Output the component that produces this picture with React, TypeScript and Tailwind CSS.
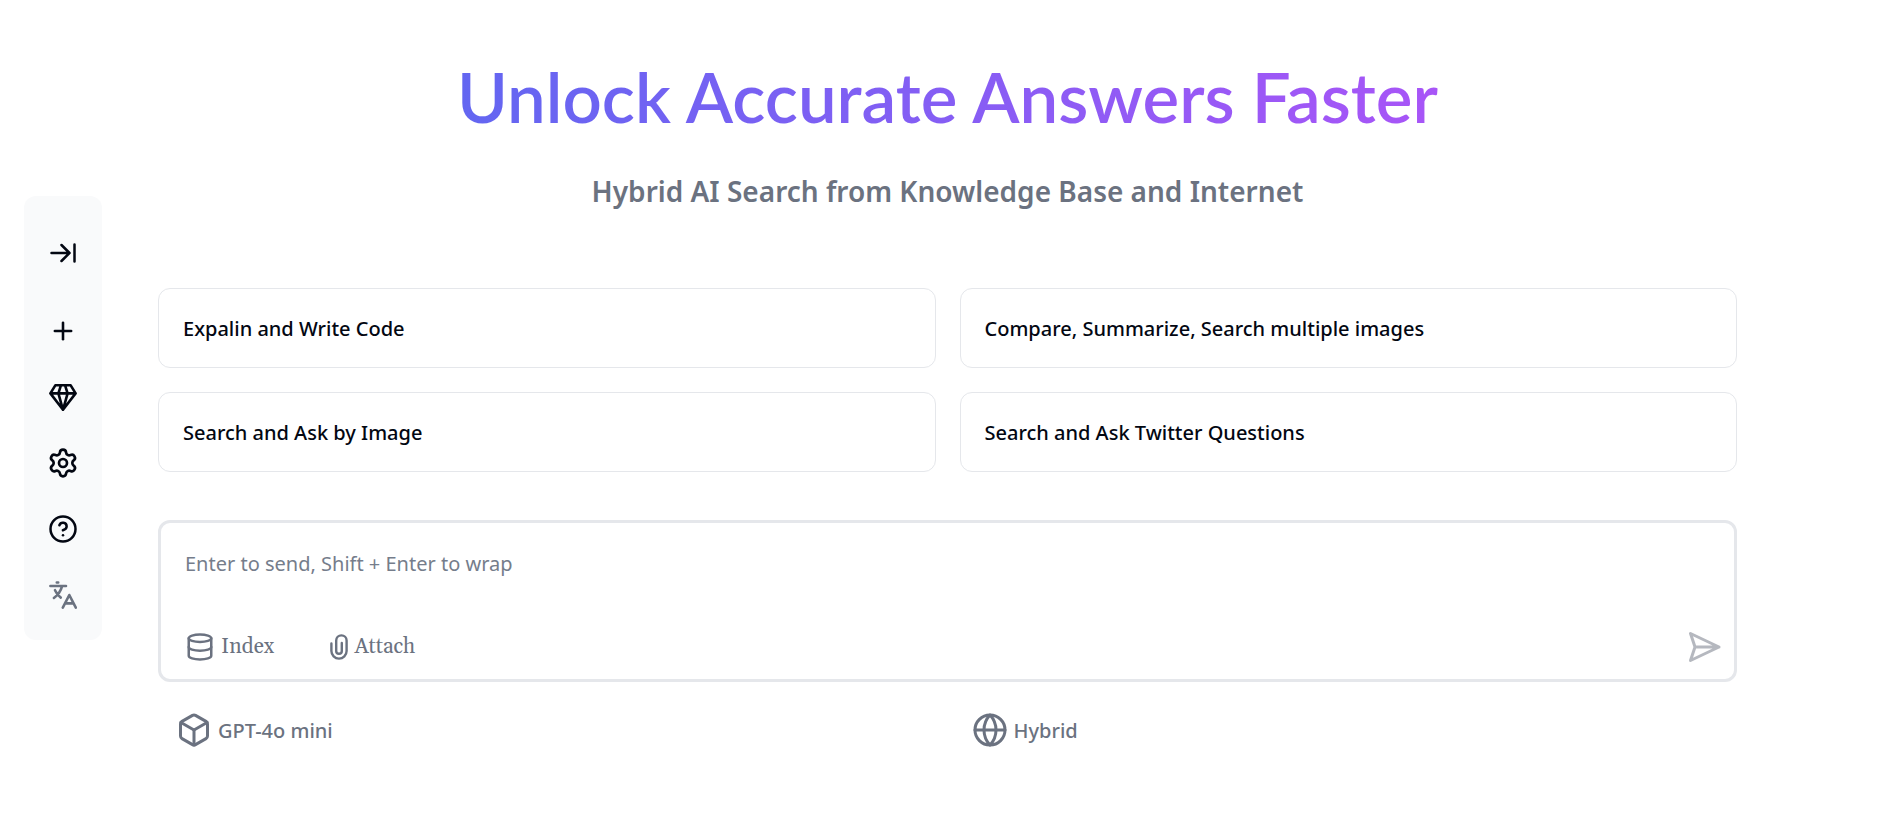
import { Box, CircleQuestionMark, Database, Globe, Plus, Settings } from "lucide-react";

const strokeProps = {
  fill: "none",
  stroke: "currentColor",
  strokeLinecap: "round",
  strokeLinejoin: "round",
} as const;

const ExpandIcon = () => (
  <svg width="28" height="28" viewBox="0 0 28 28" strokeWidth="2.5" {...strokeProps}>
    <path d="M2.5 14h18M12.5 6l8 8-8 8M25.5 5.5v17" />
  </svg>
);

const GemIcon = () => (
  <svg width="28" height="28" viewBox="0 0 28 28" strokeWidth="2.6" {...strokeProps}>
    <path d="M6.3 2.3h15.4L26.6 10.4 14 26.8 1.4 10.4zM1.4 10.4h25.2M11.9 2.3 9.4 10.4 14 26.8l4.6-16.4-2.5-8.1" />
  </svg>
);

const LanguageIcon = () => (
  <svg width="28" height="28" viewBox="0 0 28 28" strokeWidth="2.6" {...strokeProps}>
    <path d="M1.4 5h15.6M7.8 1.5h1.4M13 5.4C11.8 10 9 14 4.9 17M6 9.2c1.4 3.2 3 5.4 5.8 7.4" />
    <path d="m13.8 26.6 6.5-12.6 6.5 12.6M16.2 22.4h8.2" />
  </svg>
);

const AttachIcon = () => (
  <svg width="18" height="26" viewBox="0 0 18 26" strokeWidth="2.4" {...strokeProps}>
    <path d="M1.4 9.5V17a7.6 7.6 0 0 0 15.2 0V6.6a5.2 5.2 0 0 0-10.4 0V17a2.8 2.8 0 0 0 5.6 0V9" />
  </svg>
);

const SendIcon = () => (
  <svg width="36" height="36" viewBox="0 0 24 24" strokeWidth="2" {...strokeProps}>
    <path d="m3 3 3 9-3 9 19-9ZM6 12h16" />
  </svg>
);

const navItems = [
  { label: "New chat", icon: <Plus size={28} strokeWidth={2.2} /> },
  { label: "Premium", icon: <GemIcon /> },
  { label: "Settings", icon: <Settings size={32} /> },
  { label: "Help", icon: <CircleQuestionMark size={30} /> },
];

const prompts = [
  "Expalin and Write Code",
  "Compare, Summarize, Search multiple images",
  "Search and Ask by Image",
  "Search and Ask Twitter Questions",
];

const Sidebar = () => (
  <nav className="mt-49 ml-6 flex w-[78px] shrink-0 flex-col self-start rounded-xl bg-[#f9fafb] pt-6 pb-3">
    <button aria-label="Expand sidebar" className="mb-3 flex h-[66px] items-center justify-center">
      <ExpandIcon />
    </button>
    {navItems.map((item) => (
      <button key={item.label} aria-label={item.label} className="flex h-[66px] items-center justify-center">
        {item.icon}
      </button>
    ))}
    <button aria-label="Language" className="flex h-[66px] items-center justify-center text-[#6b7280]">
      <LanguageIcon />
    </button>
  </nav>
);

const SearchBox = () => (
  <form className="mt-12 rounded-xl border-3 border-[#e5e7eb] pt-[27px] pb-4">
    <textarea
      aria-label="Question"
      placeholder="Enter to send, Shift + Enter to wrap"
      className="block h-20 w-full resize-none px-6 text-[20px] leading-7 outline-none placeholder:text-[#757d8b]"
    />
    <div className="flex h-[33px] items-center pr-3 pl-6 font-[Gelasio,'Liberation_Serif',serif] text-[21px] text-[#6b7280]">
      <button type="button" className="flex items-center gap-1.5">
        <Database size={30} />
        <span className="pt-0.5">Index</span>
      </button>
      <button type="button" className="ml-14 flex items-center gap-1.5">
        <AttachIcon />
        <span className="pt-0.5">Attach</span>
      </button>
      <button type="submit" aria-label="Send" className="ml-auto text-[#b5b8bf]">
        <SendIcon />
      </button>
    </div>
  </form>
);

const App = () => {
  return (
    <div className="flex min-h-screen bg-white font-['Noto_Sans',sans-serif] text-[20px] text-[#030712]">
      <Sidebar />
      <main className="flex-1 pt-[55px] pr-[151px] pl-14">
        <div className="text-center">
          <h1 className="inline-block bg-linear-to-r/srgb from-[#6366f1] to-[#a855f7] bg-clip-text align-top font-[Lato,sans-serif] text-[69px] leading-[84px] font-semibold text-transparent">
            Unlock Accurate Answers Faster
          </h1>
          <p className="mt-[34px] text-[28px] leading-9 font-semibold text-[#6b7280]">
            Hybrid AI Search from Knowledge Base and Internet
          </p>
        </div>
        <div className="mt-[79px] grid grid-cols-2 gap-6">
          {prompts.map((prompt) => (
            <button
              key={prompt}
              className="h-20 rounded-xl border border-[#e5e7eb] px-6 pt-0.5 text-left font-medium"
            >
              {prompt}
            </button>
          ))}
        </div>
        <SearchBox />
        <div className="mt-[30px] grid grid-cols-2 gap-12 px-[18px] font-medium text-[#6b7280]">
          <button className="flex items-center gap-1.5">
            <Box size={36} />
            <span className="pt-0.5">GPT-4o mini</span>
          </button>
          <button className="flex items-center gap-1.5">
            <Globe size={36} />
            <span className="pt-0.5">Hybrid</span>
          </button>
        </div>
      </main>
    </div>
  );
};

export default App;
